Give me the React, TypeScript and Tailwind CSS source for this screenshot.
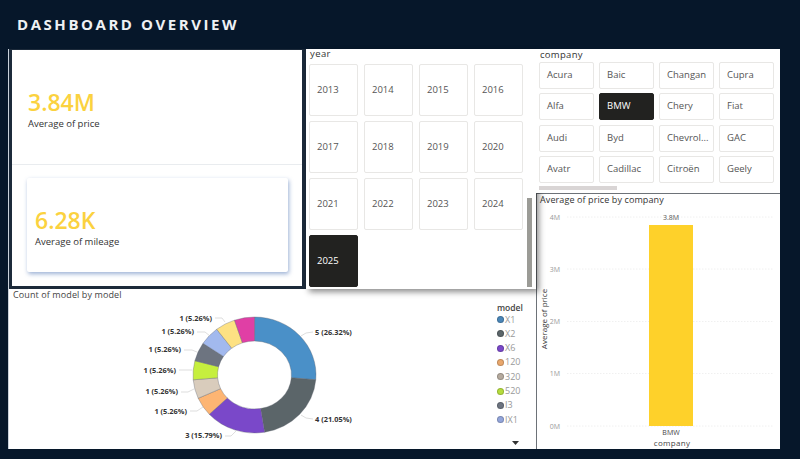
const years = ["2013","2014","2015","2016","2017","2018","2019","2020","2021","2022","2023","2024","2025"];
const companies = ["Acura","Baic","Changan","Cupra","Alfa","BMW","Chery","Fiat","Audi","Byd","Chevrol...","GAC","Avatr","Cadillac","Citroën","Geely"];
const segments: [number, string][] = [
  [26.32, "#4a90c8"], [21.05, "#5b6569"], [15.79, "#7a48c9"], [5.26, "#fdb573"], [5.26, "#d9ccbc"],
  [5.26, "#c6ef3e"], [5.26, "#6d7480"], [5.26, "#a2b9ee"], [5.26, "#fde183"], [5.29, "#e03fa5"],
];
const legend: [string, string][] = [
  ["X1", "#4a86b8"], ["X2", "#5b6569"], ["X6", "#7a48c9"], ["120", "#e9a76c"],
  ["320", "#b5aa9e"], ["520", "#b5dc3c"], ["I3", "#6d7480"], ["IX1", "#93a5da"],
];
const leftLabels: [number, number, string, string][] = [
  [212, 321, "1 (5.26%)", "M215 318 L222 318 L225 322"],
  [194, 334, "1 (5.26%)", "M197 332 L205 332 L210 336"],
  [181, 352, "1 (5.26%)", "M184 350 L192 350 L197 352"],
  [176, 373, "1 (5.26%)", "M179 370 L192 370"],
  [178, 394, "1 (5.26%)", "M181 392 L188 392 L194 389"],
  [187, 414, "1 (5.26%)", "M190 411 L197 411 L203 407"],
  [222, 438, "3 (15.79%)", "M225 436 L231 436 L236 431"],
];
const cx = 254.5, cy = 375, rx = 61.5, ry = 58, ix = 37, iy = 34;
const pt = (a: number, x: number, y: number) => {
  const t = (a / 100) * Math.PI * 2;
  return `${(cx + x * Math.sin(t)).toFixed(2)} ${(cy - y * Math.cos(t)).toFixed(2)}`;
};
let acc = 0;
const arcs = segments.map(([v, color]) => {
  const a = acc, b = acc + v;
  acc = b;
  const large = v > 50 ? 1 : 0;
  return {
    color,
    d: `M${pt(a, rx, ry)} A${rx} ${ry} 0 ${large} 1 ${pt(b, rx, ry)} L${pt(b, ix, iy)} A${ix} ${iy} 0 ${large} 0 ${pt(a, ix, iy)} Z`,
  };
});
const sans = "font-['Open_Sans',sans-serif]";
const grid: [string, number][] = [["4M", 217], ["3M", 269], ["2M", 321.5], ["1M", 373.5], ["0M", 426]];

function Tile({ label, active, h }: { label: string; active?: boolean; h: string }) {
  return (
    <div className={`${h} flex items-center rounded-[2px] border pl-[7px] text-[9.5px] ${active ? "border-[#222220] bg-[#222220] text-white" : "border-[#e8e7e5] bg-white text-[#555]"}`}>
      {label}
    </div>
  );
}

export default function App() {
  return (
    <div className={`h-[459px] w-[800px] overflow-hidden bg-[#06172a] ${sans}`}>
      <header className="flex h-[49px] items-start pl-[17px] pt-[13px]">
        <h1 className="text-[15px] font-bold leading-[22px] tracking-[2.55px] text-[#eef1f4]">DASHBOARD OVERVIEW</h1>
      </header>
      <div className="flex pl-[8px]">
        <div className="flex w-[528px] flex-col">
          <div className="flex h-[240px] border-l border-[#c9d2db]">
            <section className="h-[240px] w-[297px] border-l-[3px] border-r-[4px] border-t-[1px] border-b-[3px] border-[#1c2a3a] bg-white">
              <div className="flex h-[115px] flex-col justify-center border-b border-[#e9ecef] pl-[16px] pt-[4px]">
                <div className="text-[23px] font-semibold leading-[30px] text-[#fbd23f]">3.84M</div>
                <div className="text-[9.5px] leading-[14px] text-[#333]">Average of price</div>
              </div>
              <div className="pl-[15px] pt-[13px]">
                <div className="flex h-[94px] w-[261px] flex-col justify-center rounded-[2px] bg-white pl-[8px] pt-[4px] shadow-[1px_2px_4px_rgba(90,125,185,0.6)]">
                  <div className="text-[23px] font-semibold leading-[30px] text-[#fbd23f]">6.28K</div>
                  <div className="text-[9.5px] leading-[14px] text-[#333]">Average of mileage</div>
                </div>
              </div>
            </section>
            <section className="relative z-10 h-[240px] w-[230px] bg-white shadow-[3px_3px_6px_rgba(0,0,0,0.45)]">
              <div className="pl-[4px] text-[9.5px] leading-[10px] tracking-[0.4px] text-[#333]">year</div>
              <div className="grid w-[215px] grid-cols-[repeat(4,49px)] gap-x-[6px] gap-y-[5px] pl-[3px] pt-[5px]">
                {years.map((y) => <Tile key={y} label={y} active={y === "2025"} h="h-[52px]" />)}
              </div>
              <div className="absolute bottom-[2px] right-[4px] h-[89px] w-[5px] bg-[#9b9b96]" />
            </section>
          </div>
          <section className="relative flex h-[160px] w-[528px] flex-col border-l border-[#c9d2db] bg-white">
            <div className="h-[17px] pl-[4px] text-[9px] leading-[11px] tracking-[0.1px] text-[#444]">Count of model by model</div>
            <div className="flex flex-1">
              <svg className="block h-[143px] w-[480px] shrink-0" viewBox="9 306 480 143">
                {arcs.map((a) => <path key={a.color} d={a.d} fill={a.color} stroke="#59606a" strokeWidth="0.35" />)}
                <g fontSize="7.4" fontWeight="700" fill="#333" fontFamily="'Open Sans',sans-serif">
                  {leftLabels.map(([x, y, t]) => <text key={y} x={x} y={y} textAnchor="end">{t}</text>)}
                  <text x="315" y="334.5">5 (26.32%)</text>
                  <text x="315" y="421.5">4 (21.05%)</text>
                </g>
                <g fill="none" stroke="#c8c8c8" strokeWidth="0.6">
                  {leftLabels.map(([, y, , d]) => <path key={y} d={d} />)}
                  <path d="M301 336 Q305 332 313 332" />
                  <path d="M301 415 Q305 419 313 419" />
                </g>
              </svg>
              <aside className="ml-[8px] -mt-[4px] flex flex-col text-[9px] leading-[14.3px]">
                <div className="h-[10.5px] text-[8.5px] font-semibold leading-[12px] text-[#444]">model</div>
                {legend.map(([n, c]) => (
                  <div key={n} className="flex items-center text-[#999]">
                    <span className="size-[7px] rounded-full border border-[#0000002e]" style={{ backgroundColor: c }} />
                    <span className="pl-[1px]">{n}</span>
                  </div>
                ))}
                <svg className="ml-[15px] mt-[14px]" width="7" height="4" viewBox="0 0 7 4"><path d="M0 0H7L3.5 4Z" fill="#333" /></svg>
              </aside>
            </div>
          </section>
        </div>
        <div className="flex w-[244px] flex-col">
          <section className="relative z-20 h-[144px] bg-white pl-[3px]">
            <div className="pl-[1px] text-[9.5px] leading-[11px] tracking-[0.3px] text-[#333]">company</div>
            <div className="grid w-[236px] grid-cols-[repeat(4,55px)] gap-x-[5px] gap-y-[4.5px] pt-[1.5px]">
              {companies.map((c) => <Tile key={c} label={c} active={c === "BMW"} h="h-[27px]" />)}
            </div>
            <div className="mt-[3px] h-[4px] w-[78px] bg-[#d9d5d5]" />
          </section>
          <section className="h-[256px] w-[244px] border-l border-t border-[#6d7278] bg-white">
            <div className="pl-[3px] text-[9px] font-medium leading-[12px] tracking-[0.1px] text-[#333]">Average of price by company</div>
            <svg className="block h-[243px] w-[243px]" viewBox="538 206 243 243">
              {grid.map(([t, y]) => (
                <g key={t}>
                  <text x="561" y={y + 2.5} fontSize="7" fill="#999" textAnchor="end" fontFamily="'Open Sans',sans-serif">{t}</text>
                  <line x1="568" x2="775" y1={y} y2={y} stroke="#ececec" strokeWidth="0.8" strokeDasharray="1.5 1.5" />
                </g>
              ))}
              <rect x="650" y="225" width="44" height="201" fill="#fed12a" />
              <g fontFamily="'Open Sans',sans-serif" textAnchor="middle">
                <text x="672" y="220" fontSize="7" fill="#555">3.8M</text>
                <text x="672" y="435" fontSize="7" fill="#444">BMW</text>
                <text x="673" y="446" fontSize="8" fill="#444" letterSpacing="0.3">company</text>
                <text transform="translate(548 319) rotate(-90)" fontSize="8" fill="#333">Average of price</text>
              </g>
            </svg>
          </section>
        </div>
      </div>
    </div>
  );
}
